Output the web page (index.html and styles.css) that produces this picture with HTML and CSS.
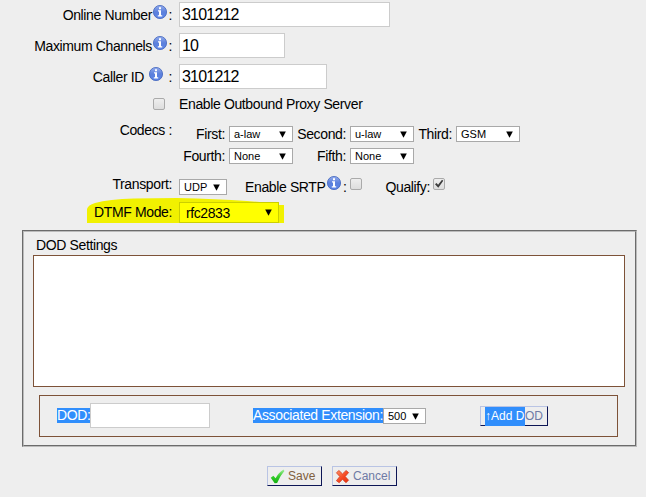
FILE: index.html
```html
<!DOCTYPE html>
<html lang="en">
<head>
<meta charset="utf-8">
<title>Trunk settings</title>
<link rel="stylesheet" href="styles.css">
</head>
<body>
<svg class="defs" width="0" height="0">
  <defs>
    <linearGradient id="blue" x1="0" y1="0" x2="0" y2="1"><stop offset="0" stop-color="#94aced"/><stop offset=".5" stop-color="#5b80dc"/><stop offset="1" stop-color="#5e86e8"/></linearGradient>
    <linearGradient id="green" x1="0" y1="0" x2="0" y2="1"><stop offset="0" stop-color="#a4ee9b"/><stop offset=".5" stop-color="#35ce2b"/><stop offset="1" stop-color="#12ad10"/></linearGradient>
    <linearGradient id="red" x1="0" y1="0" x2="1" y2="1"><stop offset="0" stop-color="#ff9468"/><stop offset=".55" stop-color="#f54620"/><stop offset="1" stop-color="#e83212"/></linearGradient>
    <symbol id="info" viewBox="0 0 14 14"><circle cx="7" cy="7" r="6.6" fill="url(#blue)" stroke="#4165bd" stroke-width=".8"/><path d="M6 2.2h2v2H6zM5 5.2h3v5h1.2v1.2H4.8v-1.2H6V6.4H5z" fill="#fff"/></symbol>
    <symbol id="arrow" viewBox="0 0 7 7"><path d="M.2.6h6.6L3.5 6.8z" fill="#000"/></symbol>
  </defs>
</svg>
<form class="form">
  <div class="row"><div class="label"><span>Online Number</span><svg class="info"><use href="#info"/></svg><span class="colon">:</span></div><div class="input w211">3101212</div></div>
  <div class="row"><div class="label"><span>Maximum Channels</span><svg class="info"><use href="#info"/></svg><span class="colon">:</span></div><div class="input w106">10</div></div>
  <div class="row"><div class="label"><span>Caller ID</span><svg class="info spaced"><use href="#info"/></svg><span class="colon">:</span></div><div class="input w148">3101212</div></div>
  <div class="proxy"><span class="check"></span><span>Enable Outbound Proxy Server</span></div>
  <div class="codecs">
    <span class="label">Codecs :</span>
    <div class="grid">
      <span>First:</span><div class="select">a-law<svg><use href="#arrow"/></svg></div>
      <span>Second:</span><div class="select">u-law<svg><use href="#arrow"/></svg></div>
      <span>Third:</span><div class="select">GSM<svg><use href="#arrow"/></svg></div>
      <span>Fourth:</span><div class="select">None<svg><use href="#arrow"/></svg></div>
      <span>Fifth:</span><div class="select">None<svg><use href="#arrow"/></svg></div>
    </div>
  </div>
  <div class="transport">
    <span class="label">Transport:</span>
    <div class="select udp">UDP<svg><use href="#arrow"/></svg></div>
    <div class="srtp"><span>Enable SRTP</span><svg class="info"><use href="#info"/></svg><span class="colon">:</span></div>
    <span class="check"></span>
    <span class="qualify">Qualify:</span>
    <span class="check"><svg viewBox="0 0 12 12"><path d="M2 6.2 3.5 5l1.6 1.7L9 1.8l1.3 1L5.3 9.8z" fill="#3c3c3c"/></svg></span>
  </div>
  <div class="dtmf">
    <svg class="marker" viewBox="0 0 197 26"><path d="M0 26V12Q1 8 8 6Q22 2 47 1.5L90 1Q130 2 160 4L173 5V8H197V26z" fill="#f1f100"/></svg>
    <span class="label">DTMF Mode:</span>
    <div class="select mode">rfc2833<svg><use href="#arrow"/></svg></div>
  </div>
  <section class="dod">
    <div class="dod-inner">
      <div class="title">DOD Settings</div>
      <div class="list"></div>
      <div class="add">
        <span class="sel dodlabel">DOD:</span><div class="input w120"></div>
        <span class="sel ext">Associated Extension:</span><div class="select num">500<svg><use href="#arrow"/></svg></div>
        <div class="button adddod"><span class="sel">↑Add D</span><span>OD</span></div>
      </div>
    </div>
  </section>
  <div class="actions">
    <div class="button save"><svg viewBox="0 0 16 16"><path d="M.8 9.4 3.6 7.2 6 9.8Q9 3.6 14.4.5L15.4 2.2Q10.8 7 7.6 15L5 15.2z" fill="url(#green)"/></svg><span>Save</span></div>
    <div class="button cancel"><svg viewBox="0 0 16 16"><path d="M1.5 4 4.2 1.6 8 5.2 11.8 1.6 14.5 3.8 10.9 8 14.5 12 11.6 14.6 8 10.9 4.5 14.6 1.5 12.5 5.1 8z" fill="url(#red)" stroke="#d23a1d" stroke-width=".8"/></svg><span>Cancel</span></div>
  </div>
</form>
</body>
</html>
```
FILE: styles.css
```css
* { box-sizing: border-box; }
body { margin: 0; background: #eee; color: #000; font: 14px/16px "Liberation Sans", Arial, sans-serif; letter-spacing: -.37px; overflow: hidden; }
.defs { position: absolute; }
.form { width: 646px; height: 497px; padding-top: 2px; white-space: nowrap; }
.row { display: flex; height: 25px; margin-bottom: 6px; }
.label { width: 172px; margin-right: 7px; flex: none; text-align: right; }
.row .label { display: flex; justify-content: flex-end; padding-top: 5px; }
.info { width: 14px; height: 14px; flex: none; margin: -2px 1px 0; }
.info.spaced { margin-left: 5px; margin-right: 5px; }
.colon { width: 4px; text-align: right; }
.input { height: 25px; border: 1px solid #ccc; background: #fff; padding: 3px 2px; font-size: 16px; line-height: 17px; letter-spacing: -.8px; }
.w211 { width: 211px; }
.w106 { width: 106px; }
.w148 { width: 148px; }
.w120 { width: 120px; }
.proxy { display: flex; align-items: center; gap: 14px; height: 16px; margin: 7px 0 14px 153px; }
.check { width: 12px; height: 12px; flex: none; border: 1px solid #aaa; border-radius: 2px; background: linear-gradient(#eee, #ddd); }
.check svg { display: block; width: 12px; height: 12px; margin: -1px; }
.codecs { display: flex; height: 38px; }
.codecs > .label { margin-top: -4px; }
.grid { display: grid; grid-template-columns: 46px 64px 49px 64px 34px 64px; grid-template-rows: 16px 16px; column-gap: 4px; row-gap: 6px; }
.grid > span { display: flex; justify-content: flex-end; }
.select { display: flex; justify-content: space-between; align-items: center; width: 64px; height: 16px; padding: 0 6px 0 4px; border: 1px solid #a9a9a9; background: #fff; font-size: 11px; line-height: 14px; letter-spacing: 0; }
.select svg { width: 7px; height: 7px; }
.transport { display: flex; height: 16px; margin-top: 15px; }
.transport .label { margin-top: -3px; }
.udp { width: 48px; }
.srtp { display: flex; margin-left: 18px; width: 105px; }
.srtp .info { margin-top: -3px; }
.srtp .colon { width: 5px; }
.transport .check { margin-top: -1px; }
.qualify { width: 45px; margin: 0 3px 0 23px; text-align: right; }
.dtmf { display: flex; position: relative; height: 21px; margin-top: 7px; }
.dtmf .label { position: relative; padding-top: 2px; }
.marker { position: absolute; left: 87px; top: -5px; width: 197px; height: 26px; }
.mode { position: relative; width: 100px; height: 21px; font-size: 14px; letter-spacing: -.4px; border-color: #cccf00; background: #ff0; padding-left: 6px; }
.dod { width: 615px; height: 217px; margin: 7px 0 0 22px; border: 1px solid; border-color: #6b6b6b #bbb #bbb #6b6b6b; }
.dod-inner { height: 215px; border: 1px solid; border-color: #bbb #6b6b6b #6b6b6b #bbb; padding: 5px 9px; }
.title { height: 18px; padding-left: 3px; }
.list { width: 592px; height: 132px; background: #fff; border: 1px solid #7d5238; }
.add { display: flex; width: 579px; height: 42px; margin: 8px 0 0 6px; border: 1px solid #7d5238; padding: 7px 0 0 17px; }
.sel { background: #308efc; color: #fff; }
.dodlabel { width: 33px; height: 15px; margin-top: 5px; line-height: 15px; }
.ext { width: 130px; height: 15px; margin: 5px 0 0 43px; line-height: 15px; }
.num { width: 43px; margin-top: 5px; }
.button { display: flex; align-items: center; height: 20px; border: 1px solid; border-color: #b9c4e4 #0d1656 #0d1656 #b9c4e4; font-size: 12px; letter-spacing: 0; color: #6f7ba5; }
.adddod { width: 68px; margin: 3px 0 0 54px; padding-left: 4px; }
.adddod .sel { height: 19px; width: 40px; line-height: 18px; }
.actions { display: flex; gap: 10px; margin: 19px 0 0 267px; }
.button svg { width: 15px; height: 15px; margin: 0 3px 0 2px; }
.save { width: 55px; color: #806040; }
.cancel { width: 65px; }
```
